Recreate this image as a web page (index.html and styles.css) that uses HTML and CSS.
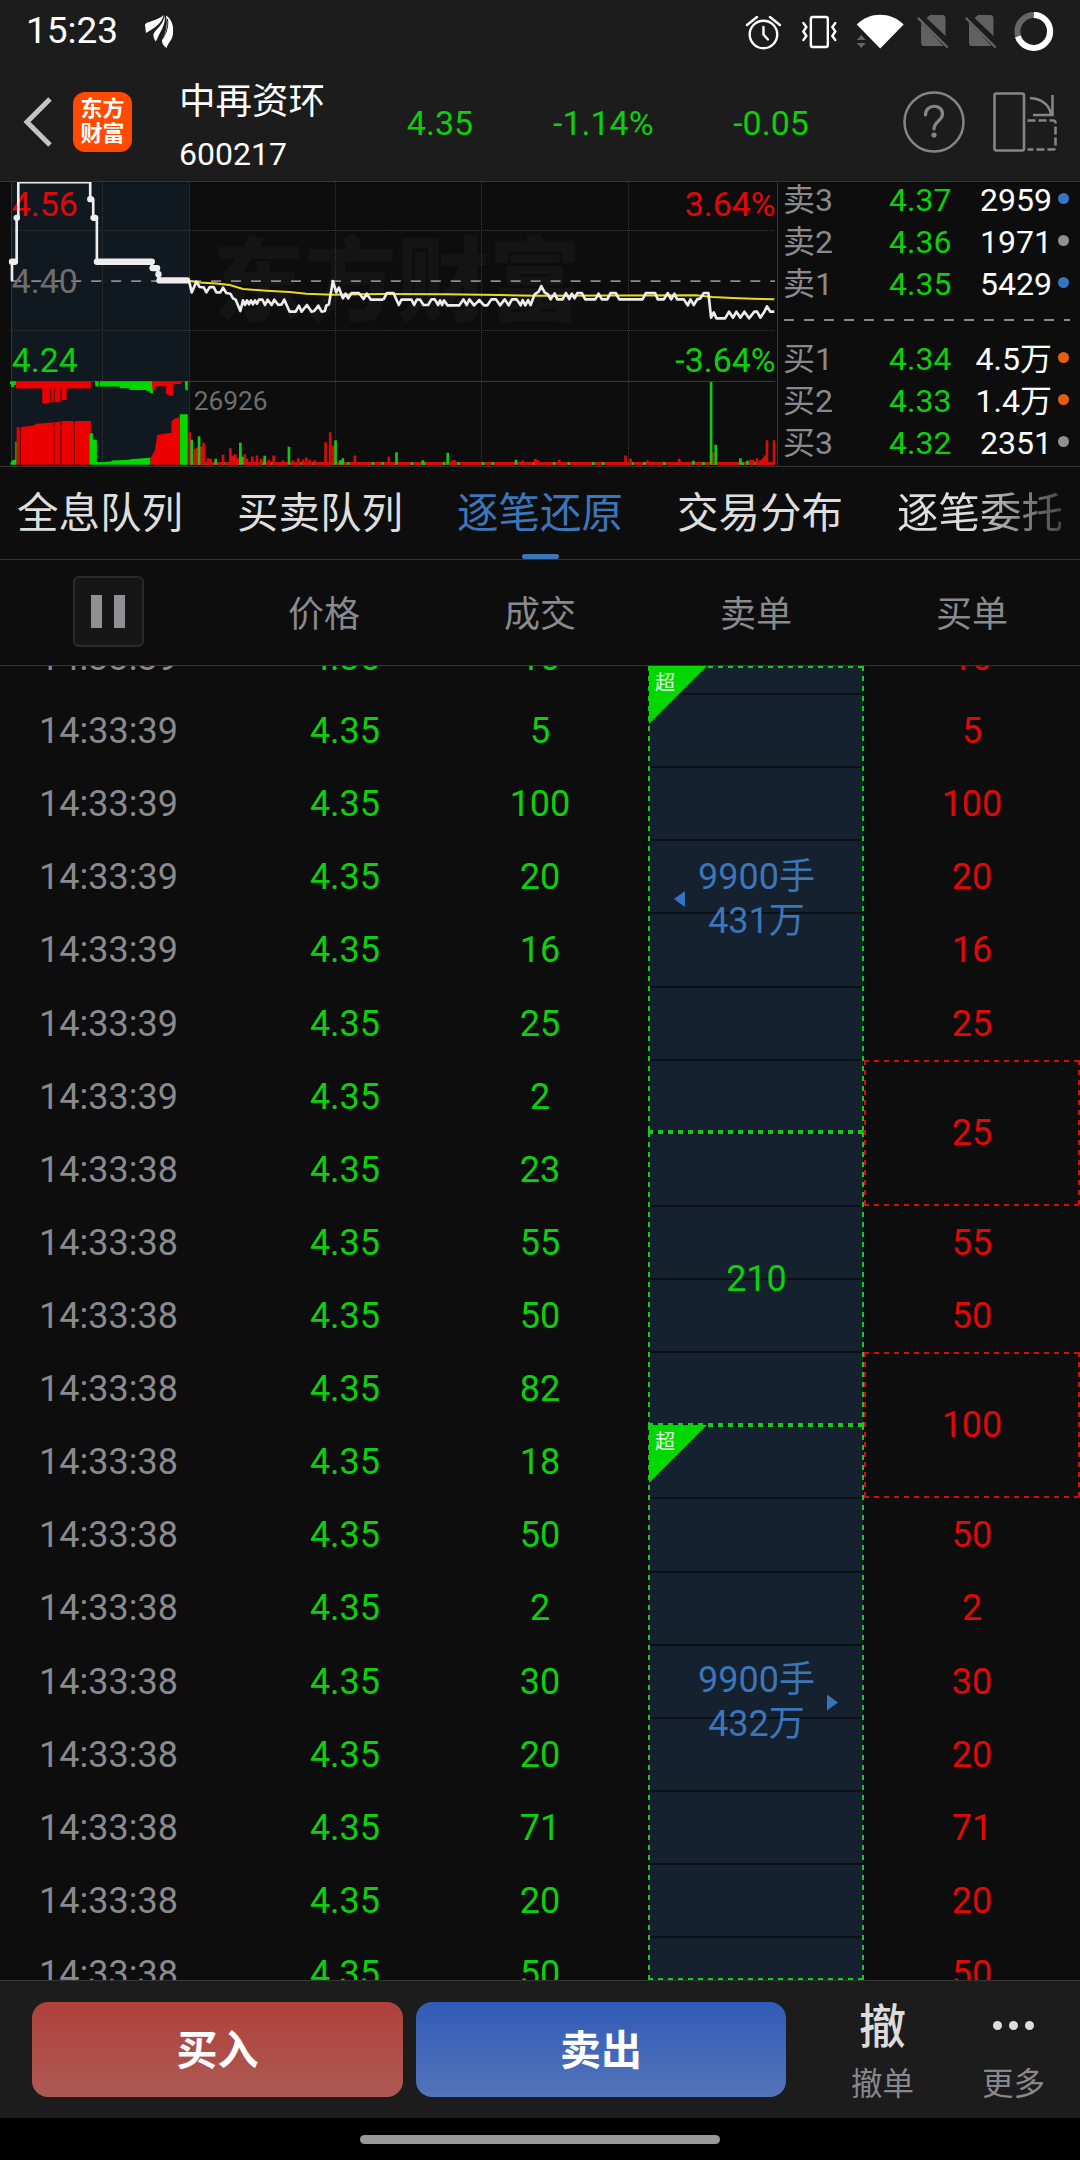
FILE: index.html
```html
<!DOCTYPE html>
<html lang="zh-CN">
<head>
    <meta charset="UTF-8">
    <meta name="viewport" content="width=device-width, initial-scale=1.0">
    <title>中再资环 600217</title>
    <link rel="stylesheet" href="styles.css">
</head>
<body>
    <div class="status-bar">
        <span class="clock">15:23</span>
        <svg class="app-icon" width="28" height="33" viewBox="0 0 28 33" fill="#fff">
            <path d="M0 10C1 7 3 8 7 6C12 4 16 3 18.500 0C18 7 10 13 1 18Z"/>
            <path d="M19.500 0.500C21 8 17 14 13 22C12.500 24 11.500 25.500 10.500 26.500C10 24 8.500 24 8.500 20C8.500 15 18 12 19.500 0.500Z"/>
            <path d="M21 0.500C29 5 30 18 26 25C24 28 22.500 30 21.500 33C19 31 17 29 17 26C18 22 24 13 21 0.500Z"/>
            <path d="M22.500 4C24 13 20 20 17.500 24" fill="none" stroke="#1c1c1c" stroke-width="1"/>
        </svg>
        <svg class="status-icons" width="310" height="40" viewBox="745 12 310 40" fill="none">
            <g stroke="#fff" stroke-width="2.4" stroke-linecap="round">
                <circle cx="763.500" cy="34.500" r="13.800"/>
                <path d="M763.500 27V34.500L768 39.500M747 25L757 17M780 25L770 17"/>
                <rect x="811" y="17" width="17" height="30" rx="2"/>
                <path d="M803.500 23L806.500 27L803.500 31.500L806.500 36L803.500 40M835.500 23L832.500 27L835.500 31.500L832.500 36L835.500 40"/>
            </g>
            <path d="M857 24.500C870 11.500 891 11.500 904 24.500L880.500 48.500Z" fill="#fff"/>
            <path d="M857 40L861.500 35L866 40ZM857 43L861.500 48L866 43Z" fill="#666"/>
            <g id="nosim">
                <path d="M927 18L930.500 15H942.500Q946 15 946 18.500V36Z M921.500 22L944 46H924.500Q921.500 46 921.500 43Z" fill="#616161"/>
                <path d="M919 18.500L947.500 47" stroke="#616161" stroke-width="2.400" stroke-linecap="round"/>
            </g>
            <use href="#nosim" x="48"/>
            <circle cx="1034.500" cy="31.500" r="16.500" stroke="#666" stroke-width="6"/>
            <path d="M1034.500 15A16.500 16.500 0 1 1 1018.500 36.500" stroke="#fff" stroke-width="6"/>
        </svg>
    </div>

    <header class="header">
        <svg class="back" width="30" height="52" viewBox="0 0 30 52"><path d="M27 3L4 26L27 49" fill="none" stroke="#c4c4c4" stroke-width="5"/></svg>
        <div class="logo">东方<br>财富</div>
        <div class="stock">
            <div class="stock-name">中再资环</div>
            <div class="stock-code">600217</div>
        </div>
        <div class="quote">
            <span>4.35</span>
            <span>-1.14%</span>
            <span>-0.05</span>
        </div>
        <div class="help">
            <svg width="62" height="62" viewBox="0 0 62 62" fill="none" stroke="#858585" stroke-width="2.500">
                <circle cx="31" cy="31" r="29.500"/>
                <path d="M22.500 24C22.500 12.500 39.500 12.500 39.500 23C39.500 30 31 30 31 38" stroke-width="3.200" stroke-linecap="round"/>
                <circle cx="31" cy="44" r="2.600" fill="#858585" stroke="none"/>
            </svg>
        </div>
        <svg class="rotate" width="64" height="60" viewBox="0 0 64 60" fill="none" stroke="#858585" stroke-width="2.600">
            <rect x="1.500" y="1.500" width="29.500" height="57" rx="2"/>
            <path d="M37 6C50 7 56 13 58 22M59.500 3V23H40"/>
            <path d="M34.500 28.500H60Q62.500 28.500 62.500 31V55Q62.500 57.500 60 57.500H34.500" stroke-dasharray="8 3"/>
        </svg>
    </header>

    <section class="market">
        <!-- user units are a third of a pixel -->
        <svg class="chart" viewBox="0 21 2334 852" width="778" height="284">
            <rect x="36" y="21" width="533" height="852" fill="#101820"/>
            <g class="watermark"><text x="638" y="416">东方财富</text></g>
            <g class="dotted">
                <path d="M307 21V870M569 21V870M1009 21V870M1447 21V870M1888 21V870"/>
                <path d="M36 166H2328M36 466H2328"/>
            </g>
            <path class="solid" d="M35 21V870M35 619.500H2328"/>
            <path class="mid" d="M34 318H2328"/>

            <text class="red" x="35" y="123">4.56</text>
            <text class="grey" x="35" y="354">4.40</text>
            <text class="green" x="35" y="591">4.24</text>
            <text class="red end" x="2330" y="123">3.64%</text>
            <text class="green end" x="2330" y="591">-3.64%</text>
            <text class="grey small" x="582" y="705">26926</text>

            <polyline class="avg" points="570,318 600,322 650,325 690,330 730,342 800,347 870,351 920,356 1000,359 1140,357 1340,358 1500,360 1610,362 2090,361 2140,366 2200,369 2260,371 2326,373"/>
            <polyline class="price" points="36,318 36,260 50,260 50,128 55,128 55,21 271,21 271,72 280,72 280,128 291,128 291,260 456,260 456,279 475,279 475,297 479,316 568,316"/>
            <path class="price-thick" d="M36 260H45M50 128H51M271 72H273M281 128H286M291 260H456M458 279H472M476 297V298M479 316H562"/>
            <polyline class="price" points="568,318 576,352 590,320 600,336 612,337 620,352 630,336 642,336 650,352 662,352 670,338 680,354 692,356 700,370 708,374 722,408 730,376 736,390 742,376 748,388 754,376 760,388 766,376 772,386 778,374 788,374 796,390 804,374 816,390 824,374 836,390 846,388 854,374 870,410 888,410 898,392 906,410 922,390 936,410 944,408 956,392 966,410 976,408 980,392 988,388 1000,318 1010,352 1018,338 1030,370 1038,356 1046,370 1056,354 1078,354 1092,372 1102,356 1114,374 1152,374"/>
            <g transform="translate(1140 0)">
                <polyline class="price" points="12,374 22,354 42,354 58,390 66,374 96,374 104,390 112,374 122,374 132,390 146,390 156,373 166,373 176,390 182,376 188,390 194,376 204,391 240,391 252,373 262,390 270,373 284,391 300,375 314,391 324,391 336,373 350,373 362,391 376,373 388,391 398,373 412,373 424,391 430,375 438,391 446,375 454,390 466,358 478,350 486,333 496,352 506,358 514,373 526,355 534,373 550,373 560,354 570,372 578,356 586,370 594,354 608,354 618,373 648,373 658,356 668,373 684,373 694,354 710,354 720,373 790,373 800,354 828,354 836,373 854,373 866,354 876,373 886,356 894,373 914,373 926,391 934,373 944,390 954,373 964,370 974,354 988,354 996,428 1004,412 1012,430 1038,430 1050,410 1062,428 1072,410 1084,428 1096,410 1110,430 1126,410 1134,410 1144,428 1156,410 1164,394 1174,410 1186,410"/>
            </g>

            <!-- call auction -->
            <path fill="#00d800" d="M30 619H48V630H42V636H34V628H30ZM285 619H452V648H440V645H390V640H360V635H287ZM452 619H460V654H450ZM555 619H564V646H557ZM32 870V862L40 855H46V800H50V870ZM268 870V775H279V795H291V870ZM291 870V862L335 860V857L390 855V853L452 849V870ZM540 870V718H564V870Z"/>
            <path fill="#ec0000" d="M48 619H273V641H200V675L185 676V681L152 683L127 686V641H48ZM456 619H545V627H520V662H508L498 656V634H466V647H458ZM50 870V758L100 752L110 747L160 743L190 738H273V775H268V870ZM452 870V850L466 825L472 780L515 774V738L527 730L540 726V870Z"/>
            <path stroke="#400" stroke-width="3" d="M61 757V870M162 745V870M183 739V870M223 738V870M152 641V683M163 641V682M183 641V680M298 619V634"/>

            <!-- volume -->
            <path class="vol-red base" d="M572 866H2326"/>
            <path class="vol-green base ticks" d="M572 866H2326"/>
            <path class="vol-red" d="M570 870V772M585 870V822M592 870V818M605 870V815M612 870V804M625 870V850M633 870V852M670 870V840M692 870V820M700 870V842M707 870V838M714 870V850M735 870V838M742 870V852M758 870V845M772 870V842M785 870V852M808 870V855M822 870V842M850 870V856M880 870V856M896 870V850M910 870V854M920 870V848M930 870V855M945 870V856M978 870V802M992 870V772M1001 870V812M1066 870V842M1168 870V846M1360 870V856M1366 870V856M1570 870V857M1608 870V852M1616 870V856M1680 870V855M1879 870V842M1894 870V852M1945 870V857M2040 870V852M2142 870V832M2254 870V855M2262 870V855M2274 870V850M2284 870V856M2292 870V850M2298 870V842M2304 870V796M2325 870V796"/>
            <path class="vol-green" d="M576 870V795M598 870V784M648 870V852M722 870V804M728 870V846M795 870V843M868 870V816M1008 870V796M1022 870V856M1030 870V850M1191 870V832M1270 870V856M1345 870V834M1550 870V855M2083 870V858M2136 870V621M2150 870V810M2224 870V850M2245 870V858"/>
        </svg>

        <div class="book">
            <div class="level"><span class="side">卖3</span><span class="price-cell">4.37</span><span class="qty">2959</span><i class="dot blue"></i></div>
            <div class="level"><span class="side">卖2</span><span class="price-cell">4.36</span><span class="qty">1971</span><i class="dot"></i></div>
            <div class="level"><span class="side">卖1</span><span class="price-cell">4.35</span><span class="qty">5429</span><i class="dot blue"></i></div>
            <div class="book-split"></div>
            <div class="level"><span class="side">买1</span><span class="price-cell">4.34</span><span class="qty">4.5万</span><i class="dot orange"></i></div>
            <div class="level"><span class="side">买2</span><span class="price-cell">4.33</span><span class="qty">1.4万</span><i class="dot orange"></i></div>
            <div class="level"><span class="side">买3</span><span class="price-cell">4.32</span><span class="qty">2351</span><i class="dot"></i></div>
        </div>
    </section>

    <nav class="tabs">
        <a class="tab">全息队列</a>
        <a class="tab">买卖队列</a>
        <a class="tab active">逐笔还原</a>
        <a class="tab">交易分布</a>
        <a class="tab">逐笔委托</a>
    </nav>

    <div class="columns table-head">
        <div><button class="pause"><i></i><i></i></button></div>
        <div>价格</div>
        <div>成交</div>
        <div>卖单</div>
        <div>买单</div>
    </div>

    <main class="columns table-body">
        <div class="col time">
            <div>14:33:39</div>
            <div>14:33:39</div>
            <div>14:33:39</div>
            <div>14:33:39</div>
            <div>14:33:39</div>
            <div>14:33:39</div>
            <div>14:33:39</div>
            <div>14:33:38</div>
            <div>14:33:38</div>
            <div>14:33:38</div>
            <div>14:33:38</div>
            <div>14:33:38</div>
            <div>14:33:38</div>
            <div>14:33:38</div>
            <div>14:33:38</div>
            <div>14:33:38</div>
            <div>14:33:38</div>
            <div>14:33:38</div>
            <div>14:33:38</div>
        </div>
        <div class="col price-col">
            <div>4.35</div>
            <div>4.35</div>
            <div>4.35</div>
            <div>4.35</div>
            <div>4.35</div>
            <div>4.35</div>
            <div>4.35</div>
            <div>4.35</div>
            <div>4.35</div>
            <div>4.35</div>
            <div>4.35</div>
            <div>4.35</div>
            <div>4.35</div>
            <div>4.35</div>
            <div>4.35</div>
            <div>4.35</div>
            <div>4.35</div>
            <div>4.35</div>
            <div>4.35</div>
        </div>
        <div class="col deal">
            <div>10</div>
            <div>5</div>
            <div>100</div>
            <div>20</div>
            <div>16</div>
            <div>25</div>
            <div>2</div>
            <div>23</div>
            <div>55</div>
            <div>50</div>
            <div>82</div>
            <div>18</div>
            <div>50</div>
            <div>2</div>
            <div>30</div>
            <div>20</div>
            <div>71</div>
            <div>20</div>
            <div>50</div>
        </div>
        <div class="sell">
            <div class="order first">
                <span class="badge">超</span>
                <i class="arrow left"></i>
                <div class="big">9900手<br>431万</div>
            </div>
            <div class="order second">210</div>
            <div class="order third">
                <span class="badge">超</span>
                <div class="big">9900手<br>432万</div>
                <i class="arrow right"></i>
            </div>
        </div>
        <div class="col buy">
            <div>10</div>
            <div>5</div>
            <div>100</div>
            <div>20</div>
            <div>16</div>
            <div>25</div>
            <div class="merged">25</div>
            <div>55</div>
            <div>50</div>
            <div class="merged">100</div>
            <div>50</div>
            <div>2</div>
            <div>30</div>
            <div>20</div>
            <div>71</div>
            <div>20</div>
            <div>50</div>
        </div>
    </main>

    <footer class="actions">
        <button class="btn btn-buy">买入</button>
        <button class="btn btn-sell">卖出</button>
        <div class="action cancel">
            <span class="glyph">撤</span>
            <span>撤单</span>
        </div>
        <div class="action">
            <span class="glyph dots"><i></i><i></i><i></i></span>
            <span>更多</span>
        </div>
    </footer>
    <div class="gesture"><i></i></div>
</body>
</html>
```
FILE: styles.css
```css
* {
    box-sizing: border-box;
}

body {
    margin: 0;
    width: 1080px;
    height: 2160px;
    overflow: hidden;
    background-color: #0d0d0d;
    color: #fff;
    font-family: Roboto, "Noto Sans CJK SC", sans-serif;
    font-size: 36px;
}

button {
    font-family: inherit;
    color: inherit;
    border: none;
    padding: 0;
}

i {
    display: block;
}

.status-bar {
    display: flex;
    height: 62px;
    padding: 0 26px;
    background-color: #1c1c1c;
}

.clock {
    width: 119px;
    font-size: 37px;
    line-height: 62px;
}

.app-icon {
    margin-top: 15px;
}

.status-icons {
    margin: 12px 0 0 572px;
}

.header {
    display: flex;
    align-items: center;
    height: 120px;
    padding: 0 22px 0 23px;
    background-color: #1c1c1c;
    border-bottom: 1px solid #353535;
}

.back {
    margin-right: 20px;
}

.logo {
    width: 59px;
    height: 60px;
    padding-top: 4px;
    border-radius: 12px;
    background-color: #ff4a00;
    font-size: 22px;
    font-weight: 700;
    line-height: 25px;
    text-align: center;
}

.stock {
    width: 148px;
    margin-left: 47px;
    padding-top: 11px;
    line-height: 54px;
    white-space: nowrap;
}

.stock-name {
    font-size: 36.5px;
}

.stock-code {
    font-size: 32px;
    line-height: 51px;
}

.quote {
    display: flex;
    width: 576px;
    font-size: 34px;
    color: #0dcf0d;
    padding-top: 2px;
}

.quote span {
    text-align: center;
}

.quote span:first-child {
    width: 226px;
}

.quote span:nth-child(2) {
    width: 100px;
}

.quote span:last-child {
    width: 236px;
}

.help {
    height: 62px;
    margin-right: 28px;
}

.market {
    display: flex;
    height: 284px;
}

.chart {
    flex: none;
    border-right: 1px solid #353535;
}

.chart text {
    font-size: 102px;
}

.chart .small {
    font-size: 79px;
}

.chart .end {
    text-anchor: end;
}

.chart .watermark text {
    font-size: 277px;
    font-weight: 900;
    fill: #141414;
}

.red {
    fill: #e00808;
}

.green {
    fill: #0dcf0d;
}

.grey {
    fill: #6e6e6e;
}

.dotted {
    stroke: #3a3a3a;
    stroke-width: 3;
    stroke-dasharray: 3 3;
    shape-rendering: crispEdges;
}

.solid {
    stroke: #3a3a3a;
    stroke-width: 3;
}

.mid {
    stroke: #8c8c8c;
    stroke-width: 5;
    stroke-dasharray: 30 30;
}

.avg {
    fill: none;
    stroke: #e9dc1e;
    stroke-width: 6;
}

.price {
    fill: none;
    stroke: #ededed;
    stroke-width: 8;
    stroke-linejoin: round;
}

.price-thick {
    stroke: #ededed;
    stroke-width: 19;
    stroke-linecap: round;
}

.vol-red {
    stroke: #d80c0c;
    stroke-width: 8;
}

.vol-green {
    stroke: #12c812;
    stroke-width: 8;
}

.base {
    stroke-width: 9;
}

.ticks {
    stroke-dasharray: 7 29 8 52 7 37 7 66 8 22 7 81;
}

.book {
    width: 302px;
    padding: 0 10px 0 5px;
    margin-top: -3px;
    font-size: 32px;
}

.level {
    display: flex;
    align-items: center;
    height: 42px;
    line-height: 42px;
}

.side {
    width: 106px;
    color: #8a8a8e;
}

.price-cell {
    width: 64px;
    color: #0dcf0d;
}

.qty {
    width: 99px;
    text-align: right;
}

.dot {
    width: 11px;
    height: 11px;
    margin: -3px 0 0 6px;
    border-radius: 50%;
    background-color: #8f8f94;
}

.dot.blue {
    background-color: #3574bf;
}

.dot.orange {
    background-color: #e85d0c;
}

.book-split {
    height: 33px;
    background: repeating-linear-gradient(90deg, #8a8a8a 0 10px, transparent 10px 20px) 1px 14px / 290px 2px no-repeat;
}

.tabs {
    display: flex;
    height: 94px;
    overflow: hidden;
    border-top: 1px solid #353535;
    border-bottom: 1px solid #353535;
}

.tab {
    position: relative;
    flex: none;
    width: 220px;
    text-align: center;
    font-size: 41.5px;
    line-height: 94px;
    color: #dedede;
}

.tab:first-child {
    margin-left: -10px;
}

.tab.active {
    color: #3b76b8;
}

.tab.active::after {
    content: "";
    position: absolute;
    left: 92px;
    bottom: 0;
    width: 37px;
    height: 5px;
    border-radius: 3px;
    background-color: #3b76b8;
}

.tab:last-child {
    background: linear-gradient(90deg, #dedede 45%, #3c3c3c 90%);
    -webkit-background-clip: text;
    background-clip: text;
    color: transparent;
}

.columns {
    display: grid;
    grid-template-columns: repeat(5, 216px);
}

.table-head {
    height: 106px;
    padding-bottom: 4px;
    align-items: center;
    text-align: center;
    color: #8a8a8e;
    border-bottom: 1px solid #353535;
}

.pause {
    display: flex;
    justify-content: center;
    align-items: center;
    gap: 12px;
    width: 71px;
    height: 71px;
    margin: 1px auto 0;
    border: 2px solid #2a2a2a;
    border-radius: 6px;
    background-color: #161616;
}

.pause i {
    width: 11px;
    height: 33px;
    background-color: #8f8f94;
}

.table-body {
    height: 1314px;
    overflow: hidden;
}

.col {
    margin-top: -45px;
    text-align: center;
    line-height: 75px;
}

.col div {
    height: 73.12px;
}

.time {
    padding-left: 1px;
    color: #8a8a8e;
}

.price-col {
    padding-left: 42px;
    color: #0dcf0d;
}

.deal {
    color: #0dcf0d;
}

.buy {
    color: #e00808;
}

/* merged orders: 5px dashes on a 10px step */
.buy .merged {
    height: 146.24px;
    line-height: 147px;
    background:
        repeating-linear-gradient(90deg, #cc1010 0 5px, transparent 5px 10px) 0 0 / 100% 2px no-repeat,
        repeating-linear-gradient(90deg, #cc1010 0 5px, transparent 5px 10px) 0 100% / 100% 2px no-repeat,
        repeating-linear-gradient(#cc1010 0 5px, transparent 5px 10px) 0 0 / 2px 100% no-repeat,
        repeating-linear-gradient(#cc1010 0 5px, transparent 5px 10px) 100% 0 / 2px 100% no-repeat;
}

.sell {
    height: 1314px;
    background: repeating-linear-gradient(#0b1015 0 1px, #15212f 1px 72.12px, #0b1015 72.12px 73.12px) 1px -45px / 214px 1400px no-repeat;
}

.order {
    position: relative;
    display: flex;
    align-items: center;
    justify-content: center;
    padding-left: 1px;
    color: #0dcf0d;
    background:
        repeating-linear-gradient(90deg, #16cc1a 0 5px, transparent 5px 10px) 0 0 / 100% 2px no-repeat,
        repeating-linear-gradient(90deg, #16cc1a 0 5px, transparent 5px 10px) 0 100% / 100% 2px no-repeat,
        repeating-linear-gradient(#16cc1a 0 5px, transparent 5px 10px) 0 0 / 2px 100% no-repeat,
        repeating-linear-gradient(#16cc1a 0 5px, transparent 5px 10px) 100% 0 / 2px 100% no-repeat;
}

.order.first {
    height: 466px;
}

.order.second {
    height: 293px;
}

.order.third {
    height: 555px;
}

.big {
    padding-top: 1px;
    text-align: center;
    line-height: 43.6px;
    color: #3b76b8;
}

.badge {
    position: absolute;
    left: 1px;
    top: 0;
    width: 58px;
    height: 58px;
    padding: 6px 0 0 6px;
    background-color: #00d800;
    clip-path: polygon(0 0, 100% 0, 0 100%);
    font-size: 20px;
    line-height: 22px;
    color: #e6ffe6;
}

.arrow {
    position: absolute;
    top: 50%;
    width: 11px;
    height: 16px;
    margin-top: -8px;
    background-color: #3574bf;
}

.arrow.left {
    left: 26px;
    clip-path: polygon(100% 0, 100% 100%, 0 50%);
}

.arrow.right {
    right: 26px;
    clip-path: polygon(0 0, 100% 50%, 0 100%);
}

.actions {
    display: flex;
    height: 138px;
    padding: 21px 0 0 32px;
    background-color: #1c1c1c;
    border-top: 1px solid #353535;
}

.btn {
    width: 371px;
    height: 95px;
    margin-right: 13px;
    padding-bottom: 5px;
    border-radius: 16px;
    font-size: 41px;
    font-weight: 700;
}

.btn-buy {
    background: linear-gradient(#b0403b, #ad5a54);
}

.btn-sell {
    width: 370px;
    background: linear-gradient(#305bb6, #5474ba);
}

.action {
    width: 131px;
    padding-top: 2px;
    text-align: center;
    font-size: 31.5px;
    line-height: 41px;
    color: #88888c;
}

.action.cancel {
    margin-left: 18px;
}

.glyph {
    display: block;
    height: 60px;
    font-size: 47px;
    line-height: 45px;
    font-weight: 500;
    color: #dcdcdc;
}

.glyph.dots {
    display: flex;
    justify-content: center;
    gap: 7px;
    padding-top: 17px;
}

.dots i {
    width: 9px;
    height: 9px;
    border-radius: 50%;
    background-color: #dcdcdc;
}

.gesture {
    height: 42px;
    padding-top: 17px;
    background-color: #000;
}

.gesture i {
    width: 360px;
    height: 9px;
    margin: 0 auto;
    border-radius: 5px;
    background-color: #999;
}
```
